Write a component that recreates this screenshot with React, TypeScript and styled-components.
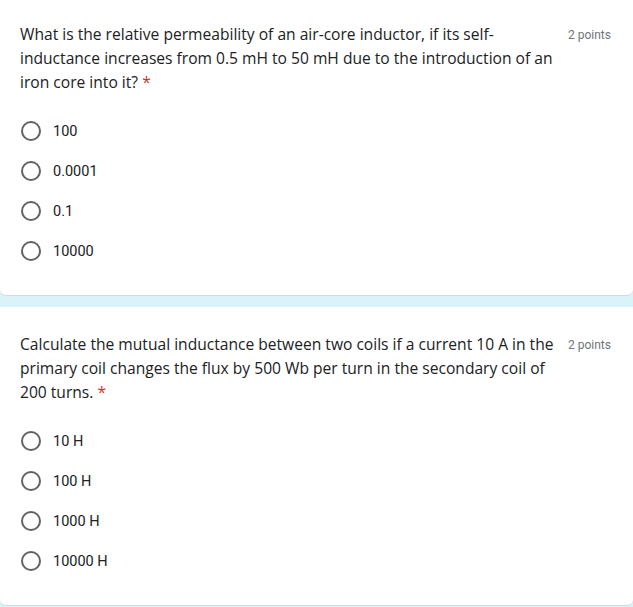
import React from 'react';
import styled, { createGlobalStyle } from 'styled-components';

interface Question {
    title: string;
    points: number;
    options: string[];
};

const questions: Question[] = [
    {
        title: 'What is the relative permeability of an air-core inductor, if its self-inductance increases from 0.5 mH to 50 mH due to the introduction of an iron core into it?',
        points: 2,
        options: ['100', '0.0001', '0.1', '10000'],
    },
    {
        title: 'Calculate the mutual inductance between two coils if a current 10 A in the primary coil changes the flux by 500 Wb per turn in the secondary coil of 200 turns.',
        points: 2,
        options: ['10 H', '100 H', '1000 H', '10000 H'],
    },
];

const QuestionCard: React.FC<{ q: Question }> = ({ q }) => {
    return (
        <Card>
            <Header>
                <Title>
                    {q.title} <Required>*</Required>
                </Title>
                <Points>{q.points} points</Points>
            </Header>
            <Options>
                {q.options.map((opt) => (
                    <Option key={opt}>
                        <Radio />
                        <Label>{opt}</Label>
                    </Option>
                ))}
            </Options>
        </Card>
    );
};

export default function App() {
    return (
        <>
            <GlobalStyle />
            <Page>
                {questions.map((q, i) => (
                    <QuestionCard key={i} q={q} />
                ))}
            </Page>
        </>
    );
}

const GlobalStyle = createGlobalStyle`
    html, body {
        margin: 0;
        padding: 0;
        background: #daf3f8;
        overflow: hidden;
    }
`;

const Page = styled.div`
    display: flex;
    flex-direction: column;
    gap: 11px;
    margin-top: -3px;
    width: 633px;
`;

const Card = styled.div`
    background: #fff;
    border: 1px solid #d3dadf;
    border-top-color: transparent;
    border-left: none;
    border-right: none;
    border-radius: 0 0 6px 6px;
    padding: 24px 22px 24px 20px;
    box-sizing: border-box;
`;

const Header = styled.div`
    display: flex;
    align-items: flex-start;
`;

const Title = styled.div`
    flex: 1;
    font-family: "Open Sans", Roboto, sans-serif;
    font-size: 15.6px;
    line-height: 24px;
    color: #202124;
    padding-right: 8px;
`;

const Required = styled.span`
    color: #d93025;
`;

const Points = styled.div`
    font-family: Roboto, sans-serif;
    font-size: 12px;
    line-height: 24px;
    padding-top: 1px;
    color: #70757a;
    white-space: nowrap;
`;

const Options = styled.div`
    display: flex;
    flex-direction: column;
    margin-top: 17px;
`;

const Option = styled.div`
    display: flex;
    align-items: center;
    height: 40px;
    gap: 12px;
    padding-left: 1px;
`;

const Radio = styled.span`
    width: 20px;
    height: 20px;
    border: 2px solid #5f6368;
    border-radius: 50%;
    box-sizing: border-box;
`;

const Label = styled.span`
    font-family: Roboto, sans-serif;
    font-size: 14.5px;
    color: #202124;
`;
